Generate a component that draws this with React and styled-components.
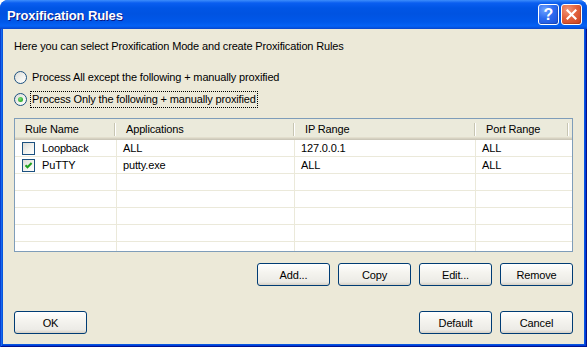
import React from "react";
import styled, { createGlobalStyle } from "styled-components";

const GlobalStyle = createGlobalStyle`
  html, body { margin: 0; padding: 0; background: #ffffff; }
  body {
    font-family: "Liberation Sans", Arial, sans-serif;
    font-size: 11px;
    color: #000;
  }
  * { box-sizing: border-box; }
`;

const Window = styled.div`
  width: 587px;
  height: 347px;
  display: flex;
  flex-direction: column;
  border-radius: 8px 8px 0 0;
  overflow: hidden;
  background: #0855dd;
`;

const TitleBar = styled.div`
  height: 29px;
  flex: none;
  display: flex;
  align-items: center;
  padding: 0 5px 0 7px;
  background: linear-gradient(
    180deg,
    #3d8dfb 0px,
    #0a5ef0 3px,
    #0055e5 8px,
    #0053e1 14px,
    #0058ea 22px,
    #0562f5 26px,
    #0550dc 28px,
    #0a45c8 29px
  );
`;

const Title = styled.div`
  flex: 1;
  color: #fff;
  font-weight: bold;
  font-size: 13px;
  letter-spacing: -0.1px;
  text-shadow: 1px 1px #0a1883;
  padding-top: 1px;
`;

const CaptionButtons = styled.div`
  display: flex;
  gap: 2px;
`;

const CaptionButton = styled.div`
  width: 21px;
  height: 21px;
  border: 1px solid #fff;
  border-radius: 3px;
  display: flex;
  align-items: center;
  justify-content: center;
  color: #fff;
  font-weight: bold;
  font-size: 16px;
  background: ${(p) =>
    p.$kind === "close"
      ? "radial-gradient(circle at 30% 25%, #f2967a 0%, #e2623d 45%, #c93e1c 100%)"
      : "radial-gradient(circle at 30% 25%, #6fa3ff 0%, #2d6cf0 45%, #1a4fd6 100%)"};
  box-shadow: inset -1px -1px rgba(0, 0, 0, 0.15);
`;

const Frame = styled.div`
  flex: 1;
  display: flex;
  min-width: 0;
  padding: 0 3px 3px 3px;
  background: #0855dd;
  box-shadow: inset 1px 0 #0a3fd0, inset -1px 0 #00138c, inset 0 -1px #00138c,
    inset 2px 0 #166aee, inset -2px 0 #003bda, inset 0 -2px #003bda;
`;

const Client = styled.div`
  flex: 1;
  min-width: 0;
  background: #ece9d8;
  display: flex;
  flex-direction: column;
  padding: 11px 11px 10px 11px;
  letter-spacing: -0.15px;
`;

const Description = styled.div`
  height: 13px;
  line-height: 13px;
`;

const RadioRow = styled.div`
  display: flex;
  align-items: center;
  height: ${(p) => (p.$first ? "15px" : "16px")};
  margin-top: ${(p) => (p.$first ? "17px" : "6px")};
`;

const RadioCircle = styled.div`
  width: 13px;
  height: 13px;
  border-radius: 50%;
  border: 1px solid #1c5180;
  background: linear-gradient(135deg, #dcdcd7 0%, #f4f4f0 60%, #ffffff 100%);
  display: flex;
  align-items: center;
  justify-content: center;
  flex: none;
`;

const RadioDot = styled.div`
  width: 5px;
  height: 5px;
  border-radius: 50%;
  background: radial-gradient(circle at 40% 35%, #7ae27a 0%, #21a121 80%);
`;

const RadioLabel = styled.span`
  margin-left: 3px;
  padding: 1px 1px;
  line-height: 13px;
  border: 1px ${(p) => (p.$focused ? "dotted #000" : "solid transparent")};
`;

const ListView = styled.div`
  margin-top: 11px;
  height: 134px;
  border: 1px solid #7f9db9;
  background: #fff;
  overflow: hidden;
  flex: none;
`;

const HeaderRow = styled.div`
  display: grid;
  grid-template-columns: 101px 179px 181px 93px minmax(0, 1fr);
  height: 21px;
  background: #ebeadb;
  box-shadow: inset 0 -1px #cbc7b8, inset 0 -2px #d6d2c2, inset 0 -3px #e2decd;
`;

const HeaderCell = styled.div`
  position: relative;
  display: flex;
  align-items: center;
  padding-left: ${(p) => (p.$noSep ? 0 : 10)}px;
  padding-bottom: 1px;
  white-space: nowrap;
  overflow: hidden;
  &::after {
    content: ${(p) => (p.$noSep ? "none" : "''")};
    position: absolute;
    right: 1px;
    top: 4px;
    bottom: 4px;
    width: 1px;
    background: #c7c5b2;
    box-shadow: 1px 0 #ffffff;
  }
`;

const BodyRow = styled.div`
  display: grid;
  grid-template-columns: 102px 178px 181px minmax(0, 1fr);
  height: 17px;
`;

const Cell = styled.div`
  display: flex;
  align-items: center;
  padding-left: ${(p) => p.$pad || 6}px;
  border-bottom: 1px solid #ebe9da;
  border-right: ${(p) => (p.$last ? "none" : "1px solid #ebe9da")};
  white-space: nowrap;
  overflow: hidden;
`;

const CheckBox = styled.div`
  width: 13px;
  height: 13px;
  border: 1px solid #1c5180;
  background: linear-gradient(135deg, #dcdcd7 0%, #f4f4f0 60%, #ffffff 100%);
  display: flex;
  align-items: center;
  justify-content: center;
  margin-right: 7px;
  flex: none;
`;

const ButtonRow = styled.div`
  display: flex;
  justify-content: ${(p) => (p.$split ? "space-between" : "flex-end")};
  margin-top: ${(p) => p.$mt}px;
  gap: 8px;
`;

const ButtonGroup = styled.div`
  display: flex;
  gap: 8px;
`;

const Button = styled.button`
  width: 73px;
  height: 23px;
  border: 1px solid #003c74;
  border-radius: 3px;
  background: linear-gradient(180deg, #ffffff 0%, #f5f4ef 40%, #ecebe6 85%, #d6d0c5 100%);
  font-family: "Liberation Sans", Arial, sans-serif;
  font-size: 11px;
  letter-spacing: -0.15px;
  color: #000;
  padding: 0;
  padding-top: 1px;
`;

const rows = [
  { name: "Loopback", checked: false, app: "ALL", ip: "127.0.0.1", port: "ALL" },
  { name: "PuTTY", checked: true, app: "putty.exe", ip: "ALL", port: "ALL" },
  null,
  null,
  null,
  null,
  null,
];

export default function App() {
  return (
    <>
      <GlobalStyle />
      <Window>
        <TitleBar>
          <Title>Proxification Rules</Title>
          <CaptionButtons>
            <CaptionButton $kind="help">?</CaptionButton>
            <CaptionButton $kind="close">
              <svg width="11" height="11" viewBox="0 0 11 11">
                <path d="M1.5 1.5 L9.5 9.5 M9.5 1.5 L1.5 9.5" stroke="#fff" strokeWidth="2.2" strokeLinecap="square" />
              </svg>
            </CaptionButton>
          </CaptionButtons>
        </TitleBar>
        <Frame>
          <Client>
            <Description>Here you can select Proxification Mode and create Proxification Rules</Description>
            <RadioRow $first>
              <RadioCircle />
              <RadioLabel>Process All except the following + manually proxified</RadioLabel>
            </RadioRow>
            <RadioRow>
              <RadioCircle>
                <RadioDot />
              </RadioCircle>
              <RadioLabel $focused>Process Only the following + manually proxified</RadioLabel>
            </RadioRow>
            <ListView>
              <HeaderRow>
                <HeaderCell>Rule Name</HeaderCell>
                <HeaderCell>Applications</HeaderCell>
                <HeaderCell>IP Range</HeaderCell>
                <HeaderCell>Port Range</HeaderCell>
                <HeaderCell $noSep />
              </HeaderRow>
              {rows.map((r, i) => (
                <BodyRow key={i}>
                  <Cell $pad={7}>
                    {r && (
                      <>
                        <CheckBox>
                          {r.checked && (
                            <svg width="9" height="9" viewBox="0 0 9 9">
                              <polyline points="1.5,4.2 3.5,6.3 7.6,2" fill="none" stroke="#21a121" strokeWidth="2" />
                            </svg>
                          )}
                        </CheckBox>
                        {r.name}
                      </>
                    )}
                  </Cell>
                  <Cell>{r && r.app}</Cell>
                  <Cell>{r && r.ip}</Cell>
                  <Cell $last>{r && r.port}</Cell>
                </BodyRow>
              ))}
            </ListView>
            <ButtonRow $mt={11}>
              <Button>Add...</Button>
              <Button>Copy</Button>
              <Button>Edit...</Button>
              <Button>Remove</Button>
            </ButtonRow>
            <ButtonRow $split $mt={25}>
              <Button>OK</Button>
              <ButtonGroup>
                <Button>Default</Button>
                <Button>Cancel</Button>
              </ButtonGroup>
            </ButtonRow>
          </Client>
        </Frame>
      </Window>
    </>
  );
}
